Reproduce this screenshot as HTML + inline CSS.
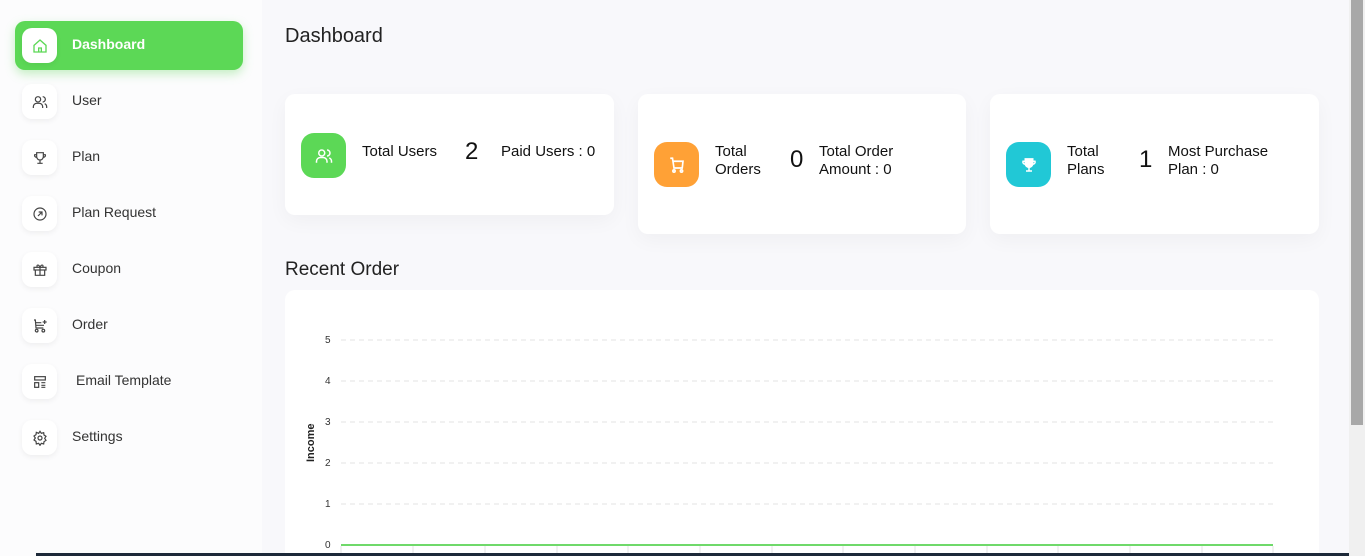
<!DOCTYPE html>
<html><head><style>
*{margin:0;padding:0;box-sizing:border-box}
html,body{width:1365px;height:556px;overflow:hidden}
body{background:#f8f8fb;font-family:"Liberation Sans",sans-serif;position:relative;color:#222}
.side{position:absolute;left:0;top:0;width:262px;height:556px;background:#fcfcfd}
.item{position:absolute;left:15px;width:228px;height:49px;border-radius:10px}
.item .ic{position:absolute;left:7px;top:7px;width:35px;height:35px;background:#fff;border-radius:10px;box-shadow:0 2px 6px rgba(0,0,0,.06);display:flex;align-items:center;justify-content:center}
.item span{position:absolute;left:57px;top:15px;font-size:14px;line-height:16px;color:#333}
.item.act{background:#5cd856;box-shadow:0 4px 10px rgba(92,216,86,.35)}
.item.act span{color:#fff;font-weight:bold}
svg{display:block}
h1{position:absolute;left:285px;top:25px;font-size:20px;font-weight:normal;color:#222}
h2{position:absolute;left:285px;top:259px;font-size:19px;font-weight:normal;color:#222}
.card{position:absolute;background:#fff;border-radius:10px;box-shadow:0 6px 20px rgba(0,0,0,.04)}
.badge{position:absolute;width:45px;height:45px;border-radius:13px;display:flex;align-items:center;justify-content:center}
.t{position:absolute;font-size:15px;line-height:18px;color:#111}
.n{position:absolute;font-size:24px;color:#111}
.chart{position:absolute;left:285px;top:290px;width:1034px;height:266px;background:#fff;border-radius:10px 10px 0 0;overflow:hidden}
.sb{position:absolute;left:1349px;top:0;width:16px;height:556px;background:#f0f0f0}
.th{position:absolute;left:1351px;top:0;width:12px;height:425px;background:#a8a8a8}
</style></head><body>
<div class="side">
<div class="item act" style="top:21px"><div class="ic"><svg width="16" height="16" viewBox="0 0 24 24" fill="none" stroke="#5cd856" stroke-width="2"><path d="M3 11l9-8 9 8v10H3z"/><path d="M10 21v-6h4v6"/></svg></div><span>Dashboard</span></div>
<div class="item" style="top:77px"><div class="ic"><svg width="16" height="16" viewBox="0 0 24 24" fill="none" stroke="#444" stroke-width="1.8"><circle cx="9" cy="8" r="4"/><path d="M2 21v-2a5 5 0 015-5h4a5 5 0 015 5v2M16 4a4 4 0 010 8M22 21v-2a5 5 0 00-3-4.5"/></svg></div><span>User</span></div>
<div class="item" style="top:133px"><div class="ic"><svg width="16" height="16" viewBox="0 0 24 24" fill="none" stroke="#444" stroke-width="1.8"><path d="M7 4h10v6a5 5 0 01-10 0zM7 7H4a3 3 0 003 4M17 7h3a3 3 0 01-3 4M12 15v5M8 20h8"/></svg></div><span>Plan</span></div>
<div class="item" style="top:189px"><div class="ic"><svg width="16" height="16" viewBox="0 0 24 24" fill="none" stroke="#444" stroke-width="1.8"><circle cx="12" cy="12" r="9"/><path d="M9 15l6-6M10 9h5v5"/></svg></div><span>Plan Request</span></div>
<div class="item" style="top:245px"><div class="ic"><svg width="16" height="16" viewBox="0 0 24 24" fill="none" stroke="#444" stroke-width="1.8"><rect x="3" y="8" width="18" height="4"/><path d="M5 12v8h14v-8M12 8v12M12 8C10 3 6 4 8 8M12 8c2-5 6-4 4 0"/></svg></div><span>Coupon</span></div>
<div class="item" style="top:301px"><div class="ic"><svg width="16" height="16" viewBox="0 0 24 24" fill="none" stroke="#444" stroke-width="1.8"><circle cx="7" cy="19" r="2"/><circle cx="17" cy="19" r="2"/><path d="M3 3h2l1 12h11M6 7h8M6 11h12M19 3v6M16 6h6"/></svg></div><span>Order</span></div>
<div class="item" style="top:357px"><div class="ic"><svg width="16" height="16" viewBox="0 0 24 24" fill="none" stroke="#444" stroke-width="1.8"><rect x="4" y="4" width="16" height="5"/><rect x="4" y="13" width="6" height="7"/><path d="M14 13h6M14 17h6M14 20h6"/></svg></div><span style="left:61px">Email Template</span></div>
<div class="item" style="top:413px"><div class="ic"><svg width="16" height="16" viewBox="0 0 24 24" fill="none" stroke="#444" stroke-width="1.8"><circle cx="12" cy="12" r="3"/><path d="M12 2l2 3 3.5-1 .5 3.5 3 2-2 3 2 3-3 2-.5 3.5-3.5-1-2 3-2-3-3.5 1L6 17l-3-2 2-3-2-3 3-2 .5-3.5L10 5z"/></svg></div><span>Settings</span></div>
</div>

<h1>Dashboard</h1>

<div class="card" style="left:285px;top:94px;width:329px;height:121px">
<div class="badge" style="left:16px;top:39px;background:#5cd856"><svg width="18" height="18" viewBox="0 0 24 24" fill="none" stroke="#fff" stroke-width="2"><circle cx="9" cy="8" r="4"/><path d="M2 21v-2a5 5 0 015-5h4a5 5 0 015 5v2M16 4a4 4 0 010 8M22 21v-2a5 5 0 00-3-4.5"/></svg></div>
<div class="t" style="left:77px;top:49px">Total Users</div>
<div class="n" style="left:180px;top:44px">2</div>
<div class="t" style="left:216px;top:49px">Paid Users : 0</div>
</div>
<div class="card" style="left:638px;top:94px;width:328px;height:140px">
<div class="badge" style="left:16px;top:48px;background:#ffa136"><svg width="18" height="18" viewBox="0 0 24 24" fill="none" stroke="#fff" stroke-width="2.2"><circle cx="8" cy="20" r="1.5"/><circle cx="18" cy="20" r="1.5"/><path d="M3 3h3l2 13h11l1-9H7"/></svg></div>
<div class="t" style="left:77px;top:49px">Total<br>Orders</div>
<div class="n" style="left:152px;top:52px">0</div>
<div class="t" style="left:181px;top:49px">Total Order<br>Amount : 0</div>
</div>
<div class="card" style="left:990px;top:94px;width:329px;height:140px">
<div class="badge" style="left:16px;top:48px;background:#21c8d6"><svg width="18" height="18" viewBox="0 0 24 24" fill="#fff" stroke="#fff" stroke-width="2"><path d="M7 4h10v6a5 5 0 01-10 0zM7 7H4a3 3 0 003 4M17 7h3a3 3 0 01-3 4M12 15v5M8 20h8" fill="none"/><path d="M7 4h10v6a5 5 0 01-10 0z"/></svg></div>
<div class="t" style="left:77px;top:49px">Total<br>Plans</div>
<div class="n" style="left:149px;top:52px">1</div>
<div class="t" style="left:178px;top:49px">Most Purchase<br>Plan : 0</div>
</div>

<h2>Recent Order</h2>
<div class="chart">
<svg width="1034" height="266" style="position:absolute;left:0;top:0">
<g stroke="#e3e3e3" stroke-dasharray="5 4" stroke-width="1">
<line x1="56" y1="50" x2="988" y2="50"/><line x1="56" y1="91" x2="988" y2="91"/><line x1="56" y1="132" x2="988" y2="132"/><line x1="56" y1="173" x2="988" y2="173"/><line x1="56" y1="214" x2="988" y2="214"/>
</g>
<g stroke="#e3e3e3"><line x1="56" y1="256" x2="56" y2="266"/><line x1="128" y1="256" x2="128" y2="266"/><line x1="200" y1="256" x2="200" y2="266"/><line x1="272" y1="256" x2="272" y2="266"/><line x1="343" y1="256" x2="343" y2="266"/><line x1="415" y1="256" x2="415" y2="266"/><line x1="487" y1="256" x2="487" y2="266"/><line x1="558" y1="256" x2="558" y2="266"/><line x1="630" y1="256" x2="630" y2="266"/><line x1="702" y1="256" x2="702" y2="266"/><line x1="773" y1="256" x2="773" y2="266"/><line x1="845" y1="256" x2="845" y2="266"/><line x1="917" y1="256" x2="917" y2="266"/><line x1="988" y1="256" x2="988" y2="266"/></g>
<line x1="56" y1="255" x2="988" y2="255" stroke="#6fd96a" stroke-width="2"/>
<g font-size="10" fill="#333" font-family="Liberation Sans"><text x="40" y="53">5</text><text x="40" y="94">4</text><text x="40" y="135">3</text><text x="40" y="176">2</text><text x="40" y="217">1</text><text x="40" y="258">0</text></g>
<text transform="translate(29,172) rotate(-90)" font-size="11" font-weight="bold" fill="#222" font-family="Liberation Sans">Income</text>
</svg>
</div>
<div style="position:absolute;left:36px;top:553px;width:1313px;height:3px;background:#1d2939"></div>
<div class="sb"></div><div class="th"></div>
</body></html>
